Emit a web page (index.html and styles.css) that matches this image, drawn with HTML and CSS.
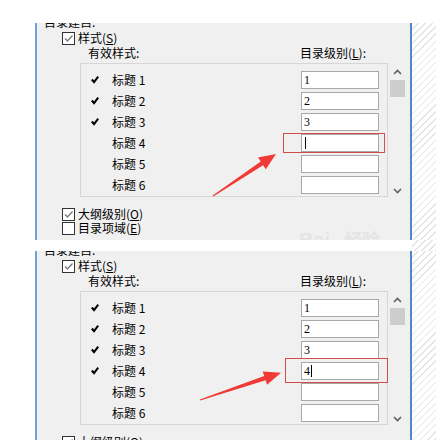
FILE: index.html
```html
<!DOCTYPE html>
<html>
<head>
<meta charset="utf-8">
<link rel="stylesheet" href="styles.css">
</head>
<body>
<div class="topgap"></div>

<div class="strip strip1">
  <div class="margin"></div>
  <div class="panel">
    <div class="hdr">目录建自:</div>
    <div class="opt first"><span class="cb"><svg width="11" height="11" viewBox="0 0 11 11"><path d="M2 5.5 L4.5 8 L9.5 2.5" fill="none" stroke="#6e6e6e" stroke-width="1.2"/></svg></span><span>样式(<u>S</u>)</span></div>
    <div class="heads"><span class="h-left">有效样式:</span><span class="h-right">目录级别(<u>L</u>):</span></div>
    <div class="listwrap">
      <div class="list">
        <div class="row"><span class="ck"><svg width="8" height="8" viewBox="0 0 8 8"><path d="M0 4.2 L1.8 2.8 L3 4.6 L6.4 0 L8 1.2 L3.1 7.8 Z" fill="#000"/></svg></span><span class="nm">标题 1</span><span class="inp">1</span></div>
        <div class="row"><span class="ck"><svg width="8" height="8" viewBox="0 0 8 8"><path d="M0 4.2 L1.8 2.8 L3 4.6 L6.4 0 L8 1.2 L3.1 7.8 Z" fill="#000"/></svg></span><span class="nm">标题 2</span><span class="inp">2</span></div>
        <div class="row"><span class="ck"><svg width="8" height="8" viewBox="0 0 8 8"><path d="M0 4.2 L1.8 2.8 L3 4.6 L6.4 0 L8 1.2 L3.1 7.8 Z" fill="#000"/></svg></span><span class="nm">标题 3</span><span class="inp">3</span></div>
        <div class="row"><span class="ck"></span><span class="nm">标题 4</span><span class="inp"><span class="caret"></span></span></div>
        <div class="row"><span class="ck"></span><span class="nm">标题 5</span><span class="inp"></span></div>
        <div class="row"><span class="ck"></span><span class="nm">标题 6</span><span class="inp"></span></div>
      </div>
      <div class="sb">
        <svg width="9" height="6" viewBox="0 0 9 6"><path d="M1 5 L4.5 1.5 L8 5" fill="none" stroke="#606060" stroke-width="1.6"/></svg>
        <div class="thumb"></div>
        <svg class="down" width="9" height="6" viewBox="0 0 9 6"><path d="M1 1 L4.5 4.5 L8 1" fill="none" stroke="#606060" stroke-width="1.6"/></svg>
      </div>
    </div>
    <div class="opt below"><span class="cb"><svg width="11" height="11" viewBox="0 0 11 11"><path d="M2 5.5 L4.5 8 L9.5 2.5" fill="none" stroke="#6e6e6e" stroke-width="1.2"/></svg></span><span>大纲级别(<u>O</u>)</span></div>
    <div class="opt"><span class="cb"></span><span>目录项域(<u>E</u>)</span></div>

    <div class="wm">Bai<span class="wm-cn">经验</span></div>
    <div class="hl hl1"></div>
    <svg class="arrow" width="373" height="217" viewBox="0 0 373 217"><polygon points="175.7,172.5 223.7,138.6 221,134.6 239,131 228.8,146.2 226.1,142.2 176.3,173.5" fill="#f03a35"/></svg>
  </div>
  <div class="hatch"></div>
</div>

<div class="strip gap">
  <div class="gapfill"></div>
  <div class="hatch"></div>
</div>

<div class="strip strip2">
  <div class="margin"></div>
  <div class="panel">
    <div class="hdr">目录建自:</div>
    <div class="opt first"><span class="cb"><svg width="11" height="11" viewBox="0 0 11 11"><path d="M2 5.5 L4.5 8 L9.5 2.5" fill="none" stroke="#6e6e6e" stroke-width="1.2"/></svg></span><span>样式(<u>S</u>)</span></div>
    <div class="heads"><span class="h-left">有效样式:</span><span class="h-right">目录级别(<u>L</u>):</span></div>
    <div class="listwrap">
      <div class="list">
        <div class="row"><span class="ck"><svg width="8" height="8" viewBox="0 0 8 8"><path d="M0 4.2 L1.8 2.8 L3 4.6 L6.4 0 L8 1.2 L3.1 7.8 Z" fill="#000"/></svg></span><span class="nm">标题 1</span><span class="inp">1</span></div>
        <div class="row"><span class="ck"><svg width="8" height="8" viewBox="0 0 8 8"><path d="M0 4.2 L1.8 2.8 L3 4.6 L6.4 0 L8 1.2 L3.1 7.8 Z" fill="#000"/></svg></span><span class="nm">标题 2</span><span class="inp">2</span></div>
        <div class="row"><span class="ck"><svg width="8" height="8" viewBox="0 0 8 8"><path d="M0 4.2 L1.8 2.8 L3 4.6 L6.4 0 L8 1.2 L3.1 7.8 Z" fill="#000"/></svg></span><span class="nm">标题 3</span><span class="inp">3</span></div>
        <div class="row"><span class="ck"><svg width="8" height="8" viewBox="0 0 8 8"><path d="M0 4.2 L1.8 2.8 L3 4.6 L6.4 0 L8 1.2 L3.1 7.8 Z" fill="#000"/></svg></span><span class="nm">标题 4</span><span class="inp">4<span class="caret"></span></span></div>
        <div class="row"><span class="ck"></span><span class="nm">标题 5</span><span class="inp"></span></div>
        <div class="row"><span class="ck"></span><span class="nm">标题 6</span><span class="inp"></span></div>
      </div>
      <div class="sb">
        <svg width="9" height="6" viewBox="0 0 9 6"><path d="M1 5 L4.5 1.5 L8 5" fill="none" stroke="#606060" stroke-width="1.6"/></svg>
        <div class="thumb"></div>
        <svg class="down" width="9" height="6" viewBox="0 0 9 6"><path d="M1 1 L4.5 4.5 L8 1" fill="none" stroke="#606060" stroke-width="1.6"/></svg>
      </div>
    </div>
    <div class="opt below"><span class="cb"><svg width="11" height="11" viewBox="0 0 11 11"><path d="M2 5.5 L4.5 8 L9.5 2.5" fill="none" stroke="#6e6e6e" stroke-width="1.2"/></svg></span><span>大纲级别(<u>O</u>)</span></div>

    <div class="hl hl2"></div>
    <svg class="arrow" width="373" height="189" viewBox="0 0 373 189"><polygon points="162.8,148.4 227.2,125 225.7,120.5 244,121.7 230.1,133.7 228.6,129.2 163.2,149.6" fill="#f03a35"/></svg>
  </div>
  <div class="hatch"></div>
</div>
</body>
</html>
```

FILE: styles.css
```css
* { box-sizing: border-box; }
html, body { margin: 0; padding: 0; background: #fff; }
body {
  width: 436px;
  height: 440px;
  overflow: hidden;
  font-family: "Noto Sans CJK SC", "Noto Sans", sans-serif;
  font-size: 12px;
  color: #000;
}
u { text-decoration: underline; text-underline-offset: 1px; }

.topgap { height: 23px; }
.strip { display: flex; }
.strip1 { height: 217px; }
.gap { height: 11px; }
.strip2 { height: 189px; }

.margin { width: 37px; border-right: 2px solid #72a0d8; background: #fff; }
.panel {
  width: 375px;
  background: #f0f0f0;
  border-right: 2px solid #4f88c9;
  position: relative;
  overflow: hidden;
}
.gapfill { width: 412px; background: #fff; }
.hatch {
  flex: 1;
  background: repeating-linear-gradient(135deg, #fff 0 4px, #e4e4e4 4px 5px);
}

.hdr { margin: -8px 0 0 7px; height: 14px; line-height: 14px; }

.opt { display: flex; align-items: center; height: 14px; line-height: 14px; margin-left: 25px; }
.opt.first { margin-top: 2px; }
.opt.below { margin-top: 10px; }
.cb {
  width: 13px; height: 13px;
  border: 1px solid #333;
  background: #fff;
  margin-right: 3px;
  display: flex; align-items: center; justify-content: center;
}

.heads { display: flex; height: 16px; line-height: 16px; padding-left: 51px; }
.h-left { width: 212px; }

.listwrap { display: flex; margin: 2px 0 0 43px; height: 134px; }
.list {
  width: 308px; height: 134px;
  border: 1px solid #d6d6d6;
  padding: 7px 8px 0 10px;
  display: flex; flex-direction: column; gap: 3px;
}
.row { display: flex; align-items: center; height: 18px; }
.ck { width: 21px; display: flex; align-items: center; }
.nm { flex: 1; line-height: 18px; }
.inp {
  width: 78px; height: 18px;
  border: 1px solid #a8a8a8;
  background: #fff;
  font-family: "Liberation Serif", serif;
  font-size: 12px;
  line-height: 16px;
  padding-left: 2px;
  display: flex; align-items: center;
}
.caret { display: inline-block; width: 1px; height: 12px; background: #000; margin-left: 1px; }

.sb {
  width: 16px; margin-left: 1px;
  display: flex; flex-direction: column; align-items: center;
  padding: 6px 0 3px;
}
.thumb { width: 15px; height: 17px; background: #cdcdcd; margin-top: 5px; }
.sb .down { margin-top: auto; }

.hl { position: absolute; border: 1px solid #d24c4c; }
.hl1 { left: 246px; top: 110px; width: 102px; height: 20px; }
.hl2 { left: 248px; top: 107px; width: 103px; height: 25px; }

.arrow { position: absolute; left: 0; top: 0; pointer-events: none; }

.wm {
  position: absolute; left: 262px; top: 203px;
  font-family: "Liberation Sans", sans-serif;
  font-weight: bold; font-size: 20px;
  color: #e4e4e4;
}
.wm-cn { font-family: "Noto Sans CJK SC", sans-serif; margin-left: 14px; font-size: 18px; }
```
